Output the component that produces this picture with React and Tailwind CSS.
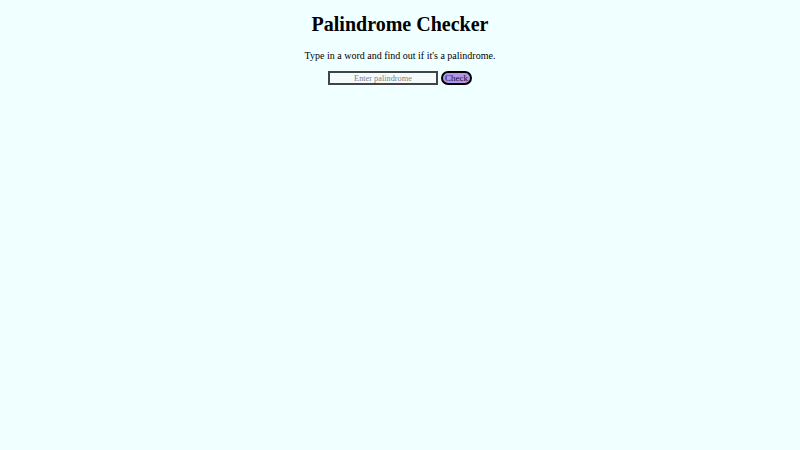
import { useState } from 'react'

export default function App() {
  const [word, setWord] = useState('')

  return (
    <div className="min-h-screen bg-[#f0ffff] text-black font-['Liberation_Serif',serif] flex flex-col items-center pt-[12px]">
      <h1 className="text-[20px] font-bold leading-[24px]">Palindrome Checker</h1>
      <p className="text-[10px] leading-[12px] mt-[14px]">Type in a word and find out if it's a palindrome.</p>
      <div className="flex items-center gap-[3px] mt-[9px]">
        <input
          value={word}
          onChange={(e) => setWord(e.target.value)}
          placeholder="Enter palindrome"
          className="w-[110px] h-[14px] border-2 border-[#444] bg-[#f4fbfd] text-center text-[8.3px] leading-none placeholder:text-[#808080] outline-none"
        />
        <button className="h-[14px] w-[31px] rounded-full border-2 border-black bg-[#b196e8] text-[9px] text-[#1a1030] leading-none flex items-center justify-center">
          Check
        </button>
      </div>
    </div>
  )
}
